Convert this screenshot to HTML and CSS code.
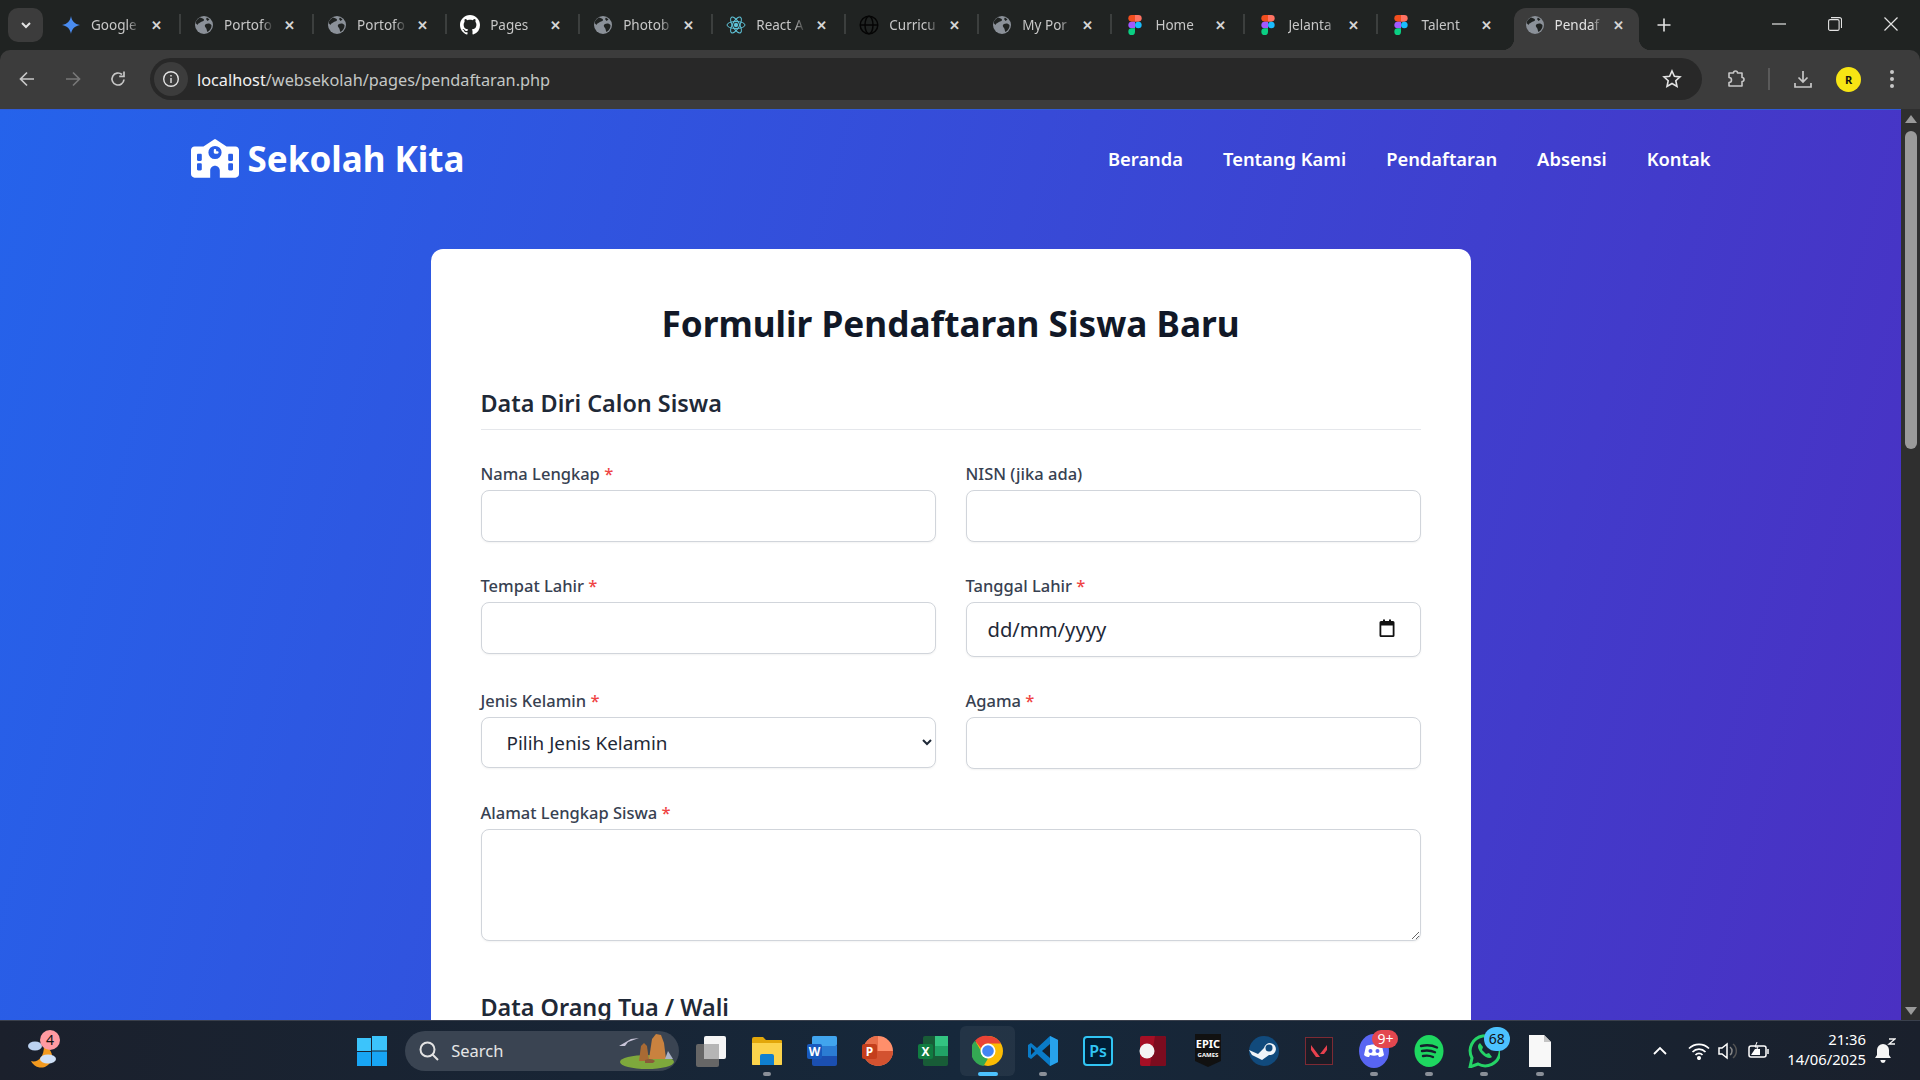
FILE: index.html
```html
<!DOCTYPE html>
<html lang="en">
<head>
    <meta charset="UTF-8">
    <meta name="viewport" content="width=device-width, initial-scale=1.0">
    <title>Pendaftaran - Sekolah Kita</title>
    <link rel="stylesheet" href="styles.css">
</head>
<body>
    <svg class="icon-defs" aria-hidden="true">
        <symbol id="globe" viewBox="0 0 20 20">
            <circle cx="10" cy="10" r="9" fill="#8b9199"/>
            <path d="M6 2.500c2 .5 4 1 4 2.500s-2 1-3 2-3 1-3.500 3L1.500 8C2 5.500 4 3.500 6 2.500zM12 9c2-1 4.500-.5 5.500 1 .3 3-1.500 5.500-4 7-1-1-.5-3-1.500-4s-2-3 0-4zM13 2.500l2.500 2-2 1.500-1.500-2z" fill="#202322"/>
        </symbol>
        <symbol id="figma" viewBox="0 0 14 21">
            <path d="M3.500 0H7v7H3.500a3.500 3.500 0 0 1 0-7z" fill="#f24e1e"/>
            <path d="M7 0h3.500a3.500 3.500 0 0 1 0 7H7z" fill="#ff7262"/>
            <path d="M3.500 7H7v7H3.500a3.500 3.500 0 0 1 0-7z" fill="#a259ff"/>
            <circle cx="10.500" cy="10.500" r="3.500" fill="#1abcfe"/>
            <path d="M3.500 14H7v3.500a3.500 3.500 0 1 1-3.500-3.500z" fill="#0acf83"/>
        </symbol>
    </svg>

    <div class="tab-strip">
        <button class="tab-menu">
            <svg width="14" height="14" viewBox="0 0 14 14"><path d="M3 5l4 4 4-4" fill="none" stroke="#e3e3e3" stroke-width="2"/></svg>
        </button>
        <div class="tab">
            <svg class="favicon" viewBox="0 0 20 20"><path d="M10 1c.8 5 3.500 8 9 9-5.500 1-8.200 4-9 9-.8-5-3.500-8-9-9 5.500-1 8.200-4 9-9z" fill="#4a8cf0"/></svg>
            <span class="tab-title">Google</span><span class="tab-close">✕</span>
        </div>
        <div class="tab"><svg class="favicon"><use href="#globe"/></svg><span class="tab-title">Portofo</span><span class="tab-close">✕</span></div>
        <div class="tab"><svg class="favicon"><use href="#globe"/></svg><span class="tab-title">Portofo</span><span class="tab-close">✕</span></div>
        <div class="tab">
            <svg class="favicon" viewBox="0 0 16 16"><path fill="#fff" d="M8 0C3.580 0 0 3.580 0 8c0 3.540 2.290 6.530 5.470 7.590.4.070.55-.17.55-.38 0-.19-.01-.82-.01-1.490-2.010.37-2.530-.49-2.690-.94-.09-.23-.48-.94-.82-1.130-.28-.15-.68-.52-.01-.53.63-.01 1.080.58 1.230.82.72 1.210 1.870.87 2.330.66.07-.52.28-.87.51-1.070-1.780-.2-3.640-.89-3.640-3.950 0-.87.31-1.590.82-2.150-.08-.2-.36-1.020.08-2.120 0 0 .67-.21 2.200.82.64-.18 1.320-.27 2-.27.68 0 1.360.09 2 .27 1.530-1.040 2.200-.82 2.200-.82.44 1.100.16 1.920.08 2.120.51.56.82 1.270.82 2.150 0 3.070-1.870 3.750-3.650 3.950.29.25.54.73.54 1.480 0 1.070-.01 1.930-.01 2.200 0 .21.15.46.55.38A8.013 8.013 0 0 0 16 8c0-4.420-3.580-8-8-8z"/></svg>
            <span class="tab-title">Pages</span><span class="tab-close">✕</span>
        </div>
        <div class="tab"><svg class="favicon"><use href="#globe"/></svg><span class="tab-title">Photob</span><span class="tab-close">✕</span></div>
        <div class="tab">
            <svg class="favicon" viewBox="0 0 20 20" fill="none" stroke="#5fc3d8" stroke-width="1"><ellipse cx="10" cy="10" rx="9" ry="3.500"/><ellipse cx="10" cy="10" rx="9" ry="3.500" transform="rotate(60 10 10)"/><ellipse cx="10" cy="10" rx="9" ry="3.500" transform="rotate(120 10 10)"/><circle cx="10" cy="10" r="1.800" fill="#5fc3d8"/></svg>
            <span class="tab-title">React A</span><span class="tab-close">✕</span>
        </div>
        <div class="tab">
            <svg class="favicon" viewBox="0 0 20 20" fill="none" stroke="#050505" stroke-width="1.500"><circle cx="10" cy="10" r="8.800"/><ellipse cx="10" cy="10" rx="4" ry="8.800"/><path d="M1.500 10h17"/></svg>
            <span class="tab-title">Curricu</span><span class="tab-close">✕</span>
        </div>
        <div class="tab"><svg class="favicon"><use href="#globe"/></svg><span class="tab-title">My Por</span><span class="tab-close">✕</span></div>
        <div class="tab"><svg class="favicon"><use href="#figma"/></svg><span class="tab-title">Home</span><span class="tab-close">✕</span></div>
        <div class="tab"><svg class="favicon"><use href="#figma"/></svg><span class="tab-title">Jelanta</span><span class="tab-close">✕</span></div>
        <div class="tab tab-before-active"><svg class="favicon"><use href="#figma"/></svg><span class="tab-title">Talent</span><span class="tab-close">✕</span></div>
        <div class="tab active"><svg class="favicon"><use href="#globe"/></svg><span class="tab-title">Pendaf</span><span class="tab-close">✕</span></div>
        <svg class="new-tab" width="16" height="16" viewBox="0 0 16 16"><path d="M8 1.500v13M1.500 8h13" stroke="#e3e3e3" stroke-width="1.600"/></svg>
        <div class="window-controls">
            <svg width="14" height="14" viewBox="0 0 14 14"><path d="M0 7h14" stroke="#e3e3e3" stroke-width="1.200"/></svg>
            <svg width="14" height="14" viewBox="0 0 14 14" fill="none" stroke="#e3e3e3" stroke-width="1.100"><rect x=".6" y="2.600" width="10.500" height="10.800" rx="1.500"/><path d="M3 .6h8.500a2 2 0 0 1 2 2V11"/></svg>
            <svg width="14" height="14" viewBox="0 0 14 14"><path d="M.5.500l13 13M13.500.500l-13 13" stroke="#e3e3e3" stroke-width="1.200"/></svg>
        </div>
    </div>

    <div class="toolbar">
        <svg class="tool-btn" width="18" height="18" viewBox="0 0 18 18" fill="none" stroke="#c7c7c7" stroke-width="1.700"><path d="M16 9H2.500M9 2.500L2.500 9 9 15.500"/></svg>
        <svg class="tool-btn" width="18" height="18" viewBox="0 0 18 18" fill="none" stroke="#777" stroke-width="1.700"><path d="M2 9h13.500M9 2.500L15.500 9 9 15.500"/></svg>
        <svg class="tool-btn" width="18" height="18" viewBox="0 0 18 18" fill="none" stroke="#c7c7c7" stroke-width="1.700"><path d="M15 9.500A6 6 0 1 1 13 4.500"/><path d="M15 1.500v4.800h-4.800" /></svg>
        <div class="address-bar">
            <span class="site-info">
                <svg width="18" height="18" viewBox="0 0 18 18" fill="none" stroke="#e3e3e3" stroke-width="1.400"><circle cx="9" cy="9" r="7.300"/><path d="M9 8v5M9 5v1.500"/></svg>
            </span>
            <span class="url"><span class="url-host">localhost</span>/websekolah/pages/pendaftaran.php</span>
            <svg class="star" width="20" height="20" viewBox="0 0 20 20" fill="none" stroke="#e3e3e3" stroke-width="1.600"><path d="M10 2l2.400 5.300 5.600.6-4.200 3.800 1.200 5.700-5-2.900-5 2.900 1.200-5.700L2 7.900l5.600-.6z"/></svg>
        </div>
        <svg class="ext-icon" width="20" height="20" viewBox="0 0 20 20" fill="none" stroke="#c7c7c7" stroke-width="1.600"><path d="M3 4h4.500a2 2 0 0 1 4 0H16v4.500a2 2 0 0 1 0 4V17H3v-3.500a2.500 2.500 0 0 0 0-5z" stroke-linejoin="round"/></svg>
        <span class="toolbar-sep"></span>
        <svg class="download-icon" width="20" height="20" viewBox="0 0 20 20" fill="none" stroke="#c7c7c7" stroke-width="1.700"><path d="M10 2v11M5.500 8.500L10 13l4.500-4.500M2 14v4h16v-4"/></svg>
        <span class="avatar">R</span>
        <svg class="more-icon" width="6" height="20" viewBox="0 0 6 20" fill="#c7c7c7"><circle cx="3" cy="3" r="2"/><circle cx="3" cy="10" r="2"/><circle cx="3" cy="17" r="2"/></svg>
    </div>

    <div class="viewport">
        <div class="page">
            <header class="site-header">
                <div class="logo">
                    <svg class="logo-icon" viewBox="0 0 640 512"><path fill="#fff" d="M337.800 5.400C327-1.800 313-1.800 302.200 5.400L166.300 96H48C21.500 96 0 117.500 0 144V464c0 26.500 21.500 48 48 48H256V416c0-35.300 28.700-64 64-64s64 28.700 64 64v96H592c26.500 0 48-21.500 48-48V144c0-26.500-21.500-48-48-48H473.700L337.800 5.400zM96 192h32c8.800 0 16 7.200 16 16v64c0 8.800-7.200 16-16 16H96c-8.800 0-16-7.200-16-16V208c0-8.800 7.200-16 16-16zm400 16c0-8.800 7.200-16 16-16h32c8.800 0 16 7.200 16 16v64c0 8.800-7.200 16-16 16H512c-8.800 0-16-7.200-16-16V208zM96 320h32c8.800 0 16 7.200 16 16v64c0 8.800-7.200 16-16 16H96c-8.800 0-16-7.200-16-16V336c0-8.800 7.200-16 16-16zm400 16c0-8.800 7.200-16 16-16h32c8.800 0 16 7.200 16 16v64c0 8.800-7.200 16-16 16H512c-8.800 0-16-7.200-16-16V336zM232 176a88 88 0 1 1 176 0 88 88 0 1 1 -176 0zm88-48c-8.800 0-16 7.200-16 16v32c0 8.800 7.200 16 16 16h32c8.800 0 16-7.200 16-16s-7.200-16-16-16H336V144c0-8.800-7.200-16-16-16z"/></svg>
                    <span>Sekolah Kita</span>
                </div>
                <nav class="main-nav">
                    <a href="#">Beranda</a>
                    <a href="#">Tentang Kami</a>
                    <a href="#">Pendaftaran</a>
                    <a href="#">Absensi</a>
                    <a href="#">Kontak</a>
                </nav>
            </header>

            <main class="form-card">
                <h1>Formulir Pendaftaran Siswa Baru</h1>
                <h2 class="section-title">Data Diri Calon Siswa</h2>
                <div class="form-grid">
                    <div class="form-group">
                        <label>Nama Lengkap <span class="required">*</span></label>
                        <input type="text">
                    </div>
                    <div class="form-group">
                        <label>NISN (jika ada)</label>
                        <input type="text">
                    </div>
                    <div class="form-group">
                        <label>Tempat Lahir <span class="required">*</span></label>
                        <input type="text">
                    </div>
                    <div class="form-group">
                        <label>Tanggal Lahir <span class="required">*</span></label>
                        <div class="date-input">
                            <span class="date-text">dd/mm/yyyy</span>
                            <svg class="date-icon" width="20" height="20" viewBox="0 0 20 20"><path d="M4 3h2V1.500h2V3h4V1.500h2V3h2a1.500 1.500 0 0 1 1.500 1.500v13A1.500 1.500 0 0 1 16 19H4a1.500 1.500 0 0 1-1.500-1.500v-13A1.500 1.500 0 0 1 4 3zm.3 4.500v9.700h11.400V7.500z" fill="#111"/></svg>
                        </div>
                    </div>
                    <div class="form-group">
                        <label>Jenis Kelamin <span class="required">*</span></label>
                        <select class="select-input">
                            <option>Pilih Jenis Kelamin</option>
                        </select>
                    </div>
                    <div class="form-group">
                        <label>Agama <span class="required">*</span></label>
                        <input type="text">
                    </div>
                    <div class="form-group full-width">
                        <label>Alamat Lengkap Siswa <span class="required">*</span></label>
                        <textarea></textarea>
                    </div>
                </div>
                <h2 class="section-title">Data Orang Tua / Wali</h2>
            </main>
        </div>
        <div class="scrollbar">
            <svg width="14" height="10" viewBox="0 0 14 10"><path d="M7 1l6 8H1z" fill="#9a9a9a"/></svg>
            <div class="scroll-thumb"></div>
            <svg class="scroll-down" width="14" height="10" viewBox="0 0 14 10"><path d="M7 9L1 1h12z" fill="#9a9a9a"/></svg>
        </div>
    </div>

    <footer class="taskbar">
        <div class="weather">
            <svg width="34" height="34" viewBox="0 0 34 34">
                <path d="M18 12a11 11 0 1 1-13 15c6 2 13-3 13-15z" fill="#f39a1f"/>
                <ellipse cx="9" cy="12" rx="7" ry="4.500" fill="#bcd3f2"/>
                <ellipse cx="22" cy="25" rx="8" ry="4.500" fill="#cfe0f7"/>
            </svg>
            <span class="weather-badge">4</span>
        </div>
        <div class="task-btn start-btn">
            <svg width="30" height="30" viewBox="0 0 30 30"><path d="M0 2h14v13H0zM15 0h15v14.500H15z" fill="#3cc4fb"/><path d="M15 15.500h15V30H15zM0 16h14v14H0z" fill="#18a5f4"/></svg>
        </div>
        <div class="search-box">
            <svg width="22" height="22" viewBox="0 0 22 22" fill="none" stroke="#e3e3e3" stroke-width="2"><circle cx="9.500" cy="9.500" r="7"/><path d="M14.500 14.500l5.500 5.500"/></svg>
            <span>Search</span>
            <svg class="search-art" width="60" height="36" viewBox="0 0 60 36">
                <ellipse cx="32" cy="29" rx="27" ry="7" fill="#7ea83c"/>
                <path d="M34 26l3-20 4-5 5 1 3 8 2 16z" fill="#c9823f"/>
                <path d="M24 28l2-15 3-3 3 3 2 15z" fill="#a96a34"/>
                <path d="M30 27c4-2 8-1 10 1l-2 2h-8z" fill="#8a5a3a"/>
                <path d="M4 13l12-7 8-1-11 4-3 4z" fill="#c8c4d8"/>
                <path d="M50 26l3-8 5 8z" fill="#aab2c4"/>
            </svg>
        </div>
        <div class="task-btn taskview-btn">
            <svg width="32" height="32" viewBox="0 0 32 32"><rect x="1" y="9" width="23" height="23" rx="2" fill="#666"/><rect x="9" y="1" width="22" height="23" rx="2" fill="#f5f5f5"/><rect x="9" y="9" width="15" height="15" fill="#b5b5b5"/></svg>
        </div>
        <div class="task-btn running">
            <svg width="32" height="32" viewBox="0 0 32 32"><path d="M1 4a2 2 0 0 1 2-2h9l3 3h15a1 1 0 0 1 1 1v23a1 1 0 0 1-1 1H2a1 1 0 0 1-1-1z" fill="#e2a70a"/><path d="M1 8h30v21a1 1 0 0 1-1 1H2a1 1 0 0 1-1-1z" fill="#fbd34c"/><path d="M9 21a2 2 0 0 1 2-2h10a2 2 0 0 1 2 2v9H9z" fill="#0f7fd0"/></svg>
        </div>
        <div class="task-btn">
            <svg width="32" height="32" viewBox="0 0 32 32"><rect x="6" y="1" width="25" height="30" rx="2" fill="#1b4fb0"/><rect x="6" y="1" width="25" height="10" rx="2" fill="#41a5ee"/><rect x="6" y="11" width="25" height="10" fill="#2b7cd3"/><rect x="1" y="9" width="15" height="15" rx="2" fill="#185abd"/><text x="8.500" y="21" class="tile-letter">W</text></svg>
        </div>
        <div class="task-btn">
            <svg width="32" height="32" viewBox="0 0 32 32"><circle cx="17" cy="16" r="15" fill="#ff8f6b"/><path d="M17 16h15a15 15 0 0 1-30 0z" fill="#d35230"/><path d="M17 1a15 15 0 0 0-15 15h15z" fill="#e86e4a"/><rect x="1" y="9" width="15" height="15" rx="2" fill="#c43e1c"/><text x="8.500" y="21" class="tile-letter">P</text></svg>
        </div>
        <div class="task-btn">
            <svg width="32" height="32" viewBox="0 0 32 32"><rect x="6" y="1" width="25" height="30" rx="2" fill="#185c37"/><rect x="18" y="1" width="13" height="10" fill="#33c481"/><rect x="18" y="11" width="13" height="10" fill="#21a366"/><rect x="1" y="9" width="15" height="15" rx="2" fill="#107c41"/><text x="8.500" y="21" class="tile-letter">X</text></svg>
        </div>
        <div class="task-btn active running">
            <svg width="32" height="32" viewBox="0 0 32 32"><circle cx="16" cy="16" r="15" fill="#fbbc04"/><path d="M16 1a15 15 0 0 1 13 7.500H16a7.500 7.500 0 0 0-7 4.700L3 5.800A15 15 0 0 1 16 1z" fill="#ea4335"/><path d="M3 5.800l6.500 11a7.500 7.500 0 0 0 6.500 6.700L11.500 31A15 15 0 0 1 3 5.800z" fill="#34a853"/><circle cx="16" cy="16" r="7.500" fill="#fff"/><circle cx="16" cy="16" r="5.800" fill="#4285f4"/></svg>
        </div>
        <div class="task-btn running">
            <svg width="32" height="32" viewBox="0 0 32 32"><path d="M23 1l8 4v22l-8 4-13-12-6 5-3-2V10l3-2 6 5z" fill="#0a7bc7"/><path d="M23 1l8 4v22l-8 4z" fill="#27a2ec"/><path d="M23 9l-8 7 8 7z" fill="#15202c"/><path d="M4 12v8l4-4z" fill="#15202c"/></svg>
        </div>
        <div class="task-btn">
            <svg width="32" height="32" viewBox="0 0 32 32"><rect x="2" y="2" width="28" height="28" rx="3" fill="#001e36" stroke="#31c5f4" stroke-width="2"/><text x="16" y="22" class="ps-letter">Ps</text></svg>
        </div>
        <div class="task-btn">
            <svg width="32" height="32" viewBox="0 0 32 32"><rect x="3" y="1" width="26" height="30" rx="2" fill="#a50f25"/><path d="M18 1h9a2 2 0 0 1 2 2v26a2 2 0 0 1-2 2H13z" fill="#7c0c1f"/><circle cx="10" cy="16" r="7.500" fill="#f5f5f5"/></svg>
        </div>
        <div class="task-btn">
            <svg width="32" height="34" viewBox="0 0 32 34"><path d="M3 0h26v27l-13 6-13-6z" fill="#111"/><text x="16" y="14" class="epic-top">EPIC</text><text x="16" y="23" class="epic-bottom">GAMES</text></svg>
        </div>
        <div class="task-btn">
            <svg width="32" height="32" viewBox="0 0 32 32"><circle cx="16" cy="16" r="15" fill="#114a7c"/><path d="M1 15l9 4 6-6a6 6 0 1 1 5 7l-7 5-10-5z" fill="#f0f4f8"/><circle cx="21" cy="13" r="3.500" fill="#114a7c"/></svg>
        </div>
        <div class="task-btn">
            <svg width="28" height="28" viewBox="0 0 28 28"><rect x=".5" y=".5" width="27" height="27" fill="#1a1c26" stroke="#7d2a34"/><path d="M6 8l9 12h-4L6 13zM22 8v5l-3 4h-4z" fill="#e8414e"/></svg>
        </div>
        <div class="task-btn running">
            <svg width="32" height="34" viewBox="0 0 32 34"><ellipse cx="16" cy="17" rx="15" ry="17" fill="#5865f2"/><path d="M8 12c5-2 11-2 16 0l2 9c-2 2-4 2-5 2l-1-2c-3 1-5 1-8 0l-1 2c-1 0-3 0-5-2z" fill="#fff"/><circle cx="12.500" cy="17" r="2" fill="#5865f2"/><circle cx="19.500" cy="17" r="2" fill="#5865f2"/></svg>
            <span class="task-badge badge-red">9+</span>
        </div>
        <div class="task-btn running">
            <svg width="30" height="32" viewBox="0 0 30 32"><ellipse cx="15" cy="16" rx="14.500" ry="16" fill="#1ed760"/><path d="M7 11c6-1.500 11-1 16 1.500M8 16c5-1 9-.7 13 1.300M9 21c4-.8 7-.5 10 1" fill="none" stroke="#15202c" stroke-width="2.400" stroke-linecap="round"/></svg>
        </div>
        <div class="task-btn running">
            <svg width="32" height="34" viewBox="0 0 32 34"><path d="M2 33l2-9A15 15 0 1 1 10 30z" fill="none" stroke="#25d366" stroke-width="3"/><path d="M11 10c-2 2-1 6 3 10s8 5 10 3l-3-4-3 1-4-4 1-3-3-4z" fill="#25d366"/></svg>
            <span class="task-badge badge-blue">68</span>
        </div>
        <div class="task-btn running">
            <svg width="24" height="32" viewBox="0 0 24 32"><path d="M1 0h15l7 7v25H1z" fill="#f8f8f8"/><path d="M16 0l7 7h-7z" fill="#c4c4c4"/></svg>
        </div>
        <div class="tray">
            <svg class="tray-chevron" width="16" height="10" viewBox="0 0 16 10"><path d="M2 8l6-6 6 6" fill="none" stroke="#fff" stroke-width="1.800"/></svg>
            <svg class="tray-wifi" width="22" height="18" viewBox="0 0 22 18" fill="none" stroke="#fff" stroke-width="1.700"><path d="M1 6.500a14 14 0 0 1 20 0M4.500 10a9 9 0 0 1 13 0M7.500 13a4.500 4.500 0 0 1 7 0"/><circle cx="11" cy="16" r="1.200" fill="#fff"/></svg>
            <svg class="tray-volume" width="22" height="20" viewBox="0 0 22 20" fill="none" stroke="#fff" stroke-width="1.500"><path d="M1 7h3l5-4v14l-5-4H1z"/><path d="M12 6a5 5 0 0 1 0 8" stroke="#888"/><path d="M15 3a9 9 0 0 1 0 14" stroke="#555"/></svg>
            <svg class="tray-battery" width="22" height="20" viewBox="0 0 22 20" fill="none" stroke="#fff" stroke-width="1.500"><rect x="1" y="5" width="17" height="11" rx="2"/><path d="M20 8v5"/><path d="M3 14l4-6h5v6z" fill="#fff" stroke="none"/><path d="M9 1L7 6h3L8 10" stroke-width="1"/></svg>
            <div class="tray-clock"><span>21:36</span><span>14/06/2025</span></div>
            <svg width="22" height="26" viewBox="0 0 22 26"><path d="M9 6a6 6 0 0 0-6 6v5l-2 3h16l-2-3v-5a6 6 0 0 0-6-6z" fill="#f5f5f5"/><path d="M6.500 22h5v.5a2.500 2.500 0 0 1-5 0z" fill="#f5f5f5"/><path d="M15 1h6l-6 5h6" fill="none" stroke="#f5f5f5" stroke-width="1.300"/></svg>
        </div>
    </footer>
</body>
</html>
```

FILE: styles.css
```css
* {
    box-sizing: border-box;
}
html, body {
    margin: 0;
    height: 100%;
    overflow: hidden;
}
body {
    display: flex;
    flex-direction: column;
    font-family: "Noto Sans", "Open Sans", sans-serif;
    background-color: #202322;
}
.icon-defs {
    position: absolute;
    width: 0;
    height: 0;
}

/* browser tabs */
.tab-strip {
    flex: 0 0 50px;
    display: flex;
    align-items: center;
    padding-left: 8px;
    background-color: #202322;
}
.tab-menu {
    flex: 0 0 35px;
    height: 34px;
    margin-right: 5px;
    margin-top: -1px;
    padding: 0;
    display: flex;
    align-items: center;
    justify-content: center;
    border: none;
    border-radius: 10px;
    background-color: #3c3c3c;
}
.tab {
    position: relative;
    flex: 0 0 133.05px;
    min-width: 0;
    height: 42px;
    margin-top: 8px;
    padding: 0 11.6px 8px 13px;
    display: flex;
    align-items: center;
    color: #c7c7c7;
    font-size: 13.5px;
}
.tab::after {
    content: "";
    position: absolute;
    right: 0;
    top: 6px;
    width: 2px;
    height: 20px;
    background-color: #3c3f3e;
}
.tab.active::after,
.tab-before-active::after {
    display: none;
}
.favicon {
    flex: 0 0 20px;
    width: 20px;
    height: 20px;
}
.tab-title {
    flex: 1;
    min-width: 0;
    margin-left: 10px;
    overflow: hidden;
    white-space: nowrap;
    -webkit-mask-image: linear-gradient(to right, #000 75%, transparent 100%);
    mask-image: linear-gradient(to right, #000 75%, transparent 100%);
}
.tab-close {
    flex: 0 0 16px;
    margin-left: 8px;
    margin-right: 5px;
    text-align: center;
    font-size: 13px;
    font-weight: 700;
    color: #d5d5d5;
}
.tab.active {
    flex-basis: 125px;
    margin-left: 2px;
    padding-left: 11px;
    padding-right: 7px;
    border-radius: 12px 12px 0 0;
    background-color: #3c3c3c;
    color: #e3e3e3;
}
.tab.active::before {
    content: "";
    position: absolute;
    left: -12px;
    right: -12px;
    bottom: 0;
    height: 12px;
    background:
        radial-gradient(circle at 0 0, #202322 12px, #3c3c3c 12.5px) left / 12px 12px no-repeat,
        radial-gradient(circle at 100% 0, #202322 12px, #3c3c3c 12.5px) right / 12px 12px no-repeat;
}
.new-tab {
    margin-left: 17px;
}
.window-controls {
    margin-left: auto;
    padding-right: 22px;
    display: flex;
    gap: 42px;
    align-items: center;
    margin-bottom: 2px;
}

/* address bar row */
.toolbar {
    flex: 0 0 59px;
    display: flex;
    align-items: center;
    padding: 0 25px 1px 18px;
    background-color: #3c3c3c;
    border-radius: 10px 10px 0 0;
}
.tool-btn {
    margin-right: 27.5px;
}
.tool-btn:nth-of-type(3) {
    margin-right: 23px;
}
.address-bar {
    flex: 1;
    height: 42px;
    display: flex;
    align-items: center;
    padding: 0 20px 0 4px;
    border-radius: 21px;
    background-color: #282828;
    color: #c4c7c5;
    font-size: 16.3px;
}
.site-info {
    width: 34px;
    height: 34px;
    display: flex;
    align-items: center;
    justify-content: center;
    border-radius: 50%;
    background-color: #3c3c3c;
}
.url {
    margin-left: 9px;
    margin-top: 1px;
    flex: 1;
    white-space: nowrap;
}
.url-host {
    color: #f1f1f1;
}
.ext-icon {
    margin-left: 24px;
}
.toolbar-sep {
    width: 2px;
    height: 22px;
    margin-left: 22px;
    background-color: #5a5a5a;
}
.download-icon {
    margin-left: 23px;
}
.avatar {
    width: 25px;
    height: 25px;
    margin-left: 23px;
    display: flex;
    align-items: center;
    justify-content: center;
    border-radius: 50%;
    background-color: #f7e514;
    color: #111;
    font-size: 11px;
    font-weight: 700;
}
.more-icon {
    margin-left: 28px;
}

/* page */
.viewport {
    flex: 1;
    min-height: 0;
    display: flex;
}
.page {
    flex: 1;
    overflow: hidden;
    background: linear-gradient(105deg, #2563eb 0%, #4a30c2 100%);
    border-top: 1px solid #2f5bd8;
}
.site-header {
    width: 1520px;
    height: 96px;
    margin: 0 auto;
    display: flex;
    align-items: center;
    justify-content: space-between;
}
.logo {
    display: flex;
    align-items: center;
    gap: 9px;
    color: white;
    font-size: 35px;
    font-weight: 700;
}
.logo-icon {
    width: 48px;
    height: 39px;
}
.main-nav {
    display: flex;
    gap: 40px;
}
.main-nav a {
    color: white;
    text-decoration: none;
    font-size: 18.35px;
    font-weight: 600;
}
.form-card {
    width: 1040px;
    margin: 43px auto 0;
    padding: 44px 50px 40px;
    border-radius: 12px;
    background-color: white;
}
.form-card h1 {
    margin: 0 0 32px;
    text-align: center;
    font-size: 35.2px;
    line-height: 60px;
    font-weight: 700;
    color: #111827;
}
.section-title {
    margin: 0;
    padding-bottom: 8px;
    border-bottom: 1px solid #e5e7eb;
    font-size: 23.4px;
    line-height: 36px;
    font-weight: 600;
    color: #1f2937;
}
.form-grid {
    margin: 31px 0 17px;
    display: grid;
    grid-template-columns: 1fr 1fr;
    column-gap: 30px;
}
.form-group {
    margin-bottom: 31px;
    display: flex;
    flex-direction: column;
    align-items: stretch;
}
.full-width {
    grid-column: span 2;
}
.form-group label {
    height: 29px;
    line-height: 26px;
    font-size: 16.5px;
    font-weight: 500;
    color: #374151;
}
.required {
    color: #ef4444;
}
.form-group input,
.select-input,
.date-input,
.form-group textarea {
    border: 1px solid #d1d5db;
    border-radius: 8px;
    background-color: white;
    box-shadow: 0 1px 2px rgba(0, 0, 0, 0.05);
    font-family: inherit;
    font-size: 18.9px;
    color: #1f2937;
}
.form-group input {
    height: 52px;
}
.select-input {
    height: 51px;
    padding-left: 21px;
}
.date-input {
    height: 55px;
    padding: 0 23px 0 21px;
    display: flex;
    align-items: center;
    justify-content: space-between;
    font-size: 20.2px;
}
.date-text {
    margin-top: -2px;
}
.date-icon {
    margin-top: -3px;
}
.form-group textarea {
    height: 112px;
    display: block;
}

/* scrollbar */
.scrollbar {
    flex: 0 0 19px;
    display: flex;
    flex-direction: column;
    align-items: center;
    padding-top: 5px;
    background-color: #2f2f2f;
}
.scroll-thumb {
    width: 12px;
    height: 318px;
    margin-top: 7px;
    border-radius: 6px;
    background-color: #9a9a9a;
}
.scroll-down {
    margin-top: auto;
    margin-bottom: 4px;
}

/* windows taskbar */
.taskbar {
    flex: 0 0 60px;
    display: flex;
    align-items: center;
    border-top: 1px solid #3a404c;
    background: linear-gradient(to right, #1b202c 0%, #16283b 50%, #1a202c 100%);
}
.weather {
    position: relative;
    flex: 0 0 344px;
    height: 40px;
    padding-left: 26px;
    display: flex;
    align-items: center;
}
.weather-badge {
    position: absolute;
    left: 40px;
    top: -1px;
    width: 20px;
    height: 20px;
    border-radius: 50%;
    background-color: #ff9aa2;
    color: #111;
    font-size: 14px;
    line-height: 20px;
    text-align: center;
}
.task-btn {
    position: relative;
    flex: 0 0 55.2px;
    height: 50px;
    display: flex;
    align-items: center;
    justify-content: center;
    border-radius: 6px;
}
.start-btn {
    margin-right: 6px;
}
.taskview-btn {
    margin-right: 1px;
}
.task-btn.running::after {
    content: "";
    position: absolute;
    left: 50%;
    bottom: 0;
    width: 8px;
    height: 4px;
    margin-left: -4px;
    border-radius: 2px;
    background-color: #8a8f98;
}
.task-btn.active {
    background-color: rgba(255, 255, 255, 0.06);
}
.task-btn.active::after {
    width: 20px;
    margin-left: -10px;
    background-color: #4cc2ff;
}
.search-box {
    flex: 0 0 274px;
    height: 40px;
    margin-right: 4px;
    padding: 0 4px 0 13px;
    display: flex;
    align-items: center;
    gap: 11px;
    border-radius: 20px;
    background-color: #3a4452;
    color: #e6e6e6;
    font-size: 16.5px;
}
.search-art {
    margin-left: auto;
}
.tile-letter {
    fill: white;
    font-size: 12px;
    font-weight: 700;
    text-anchor: middle;
}
.ps-letter {
    fill: #31c5f4;
    font-size: 16px;
    font-weight: 600;
    text-anchor: middle;
}
.epic-top {
    fill: white;
    font-size: 11px;
    font-weight: 700;
    text-anchor: middle;
}
.epic-bottom {
    fill: white;
    font-size: 6px;
    font-weight: 700;
    text-anchor: middle;
}
.task-badge {
    position: absolute;
    top: 4px;
    padding: 0 5px;
    min-width: 18px;
    height: 18px;
    border-radius: 10px;
    font-size: 14px;
    line-height: 18px;
    text-align: center;
}
.badge-red {
    left: 26px;
    background-color: #e3474f;
    color: #fff;
}
.badge-blue {
    left: 27px;
    height: 24px;
    line-height: 24px;
    top: 1px;
    border-radius: 12px;
    background-color: #4cc2ff;
    color: #111;
}
.tray {
    margin-left: auto;
    padding-right: 24px;
    display: flex;
    align-items: center;
    color: white;
}
.tray-wifi {
    margin-left: 20px;
}
.tray-volume,
.tray-battery {
    margin-left: 8px;
}
.tray-clock {
    margin-left: 17px;
    margin-right: 8px;
    margin-top: -4px;
    display: flex;
    flex-direction: column;
    align-items: flex-end;
    font-size: 14.8px;
    line-height: 20px;
}
```
